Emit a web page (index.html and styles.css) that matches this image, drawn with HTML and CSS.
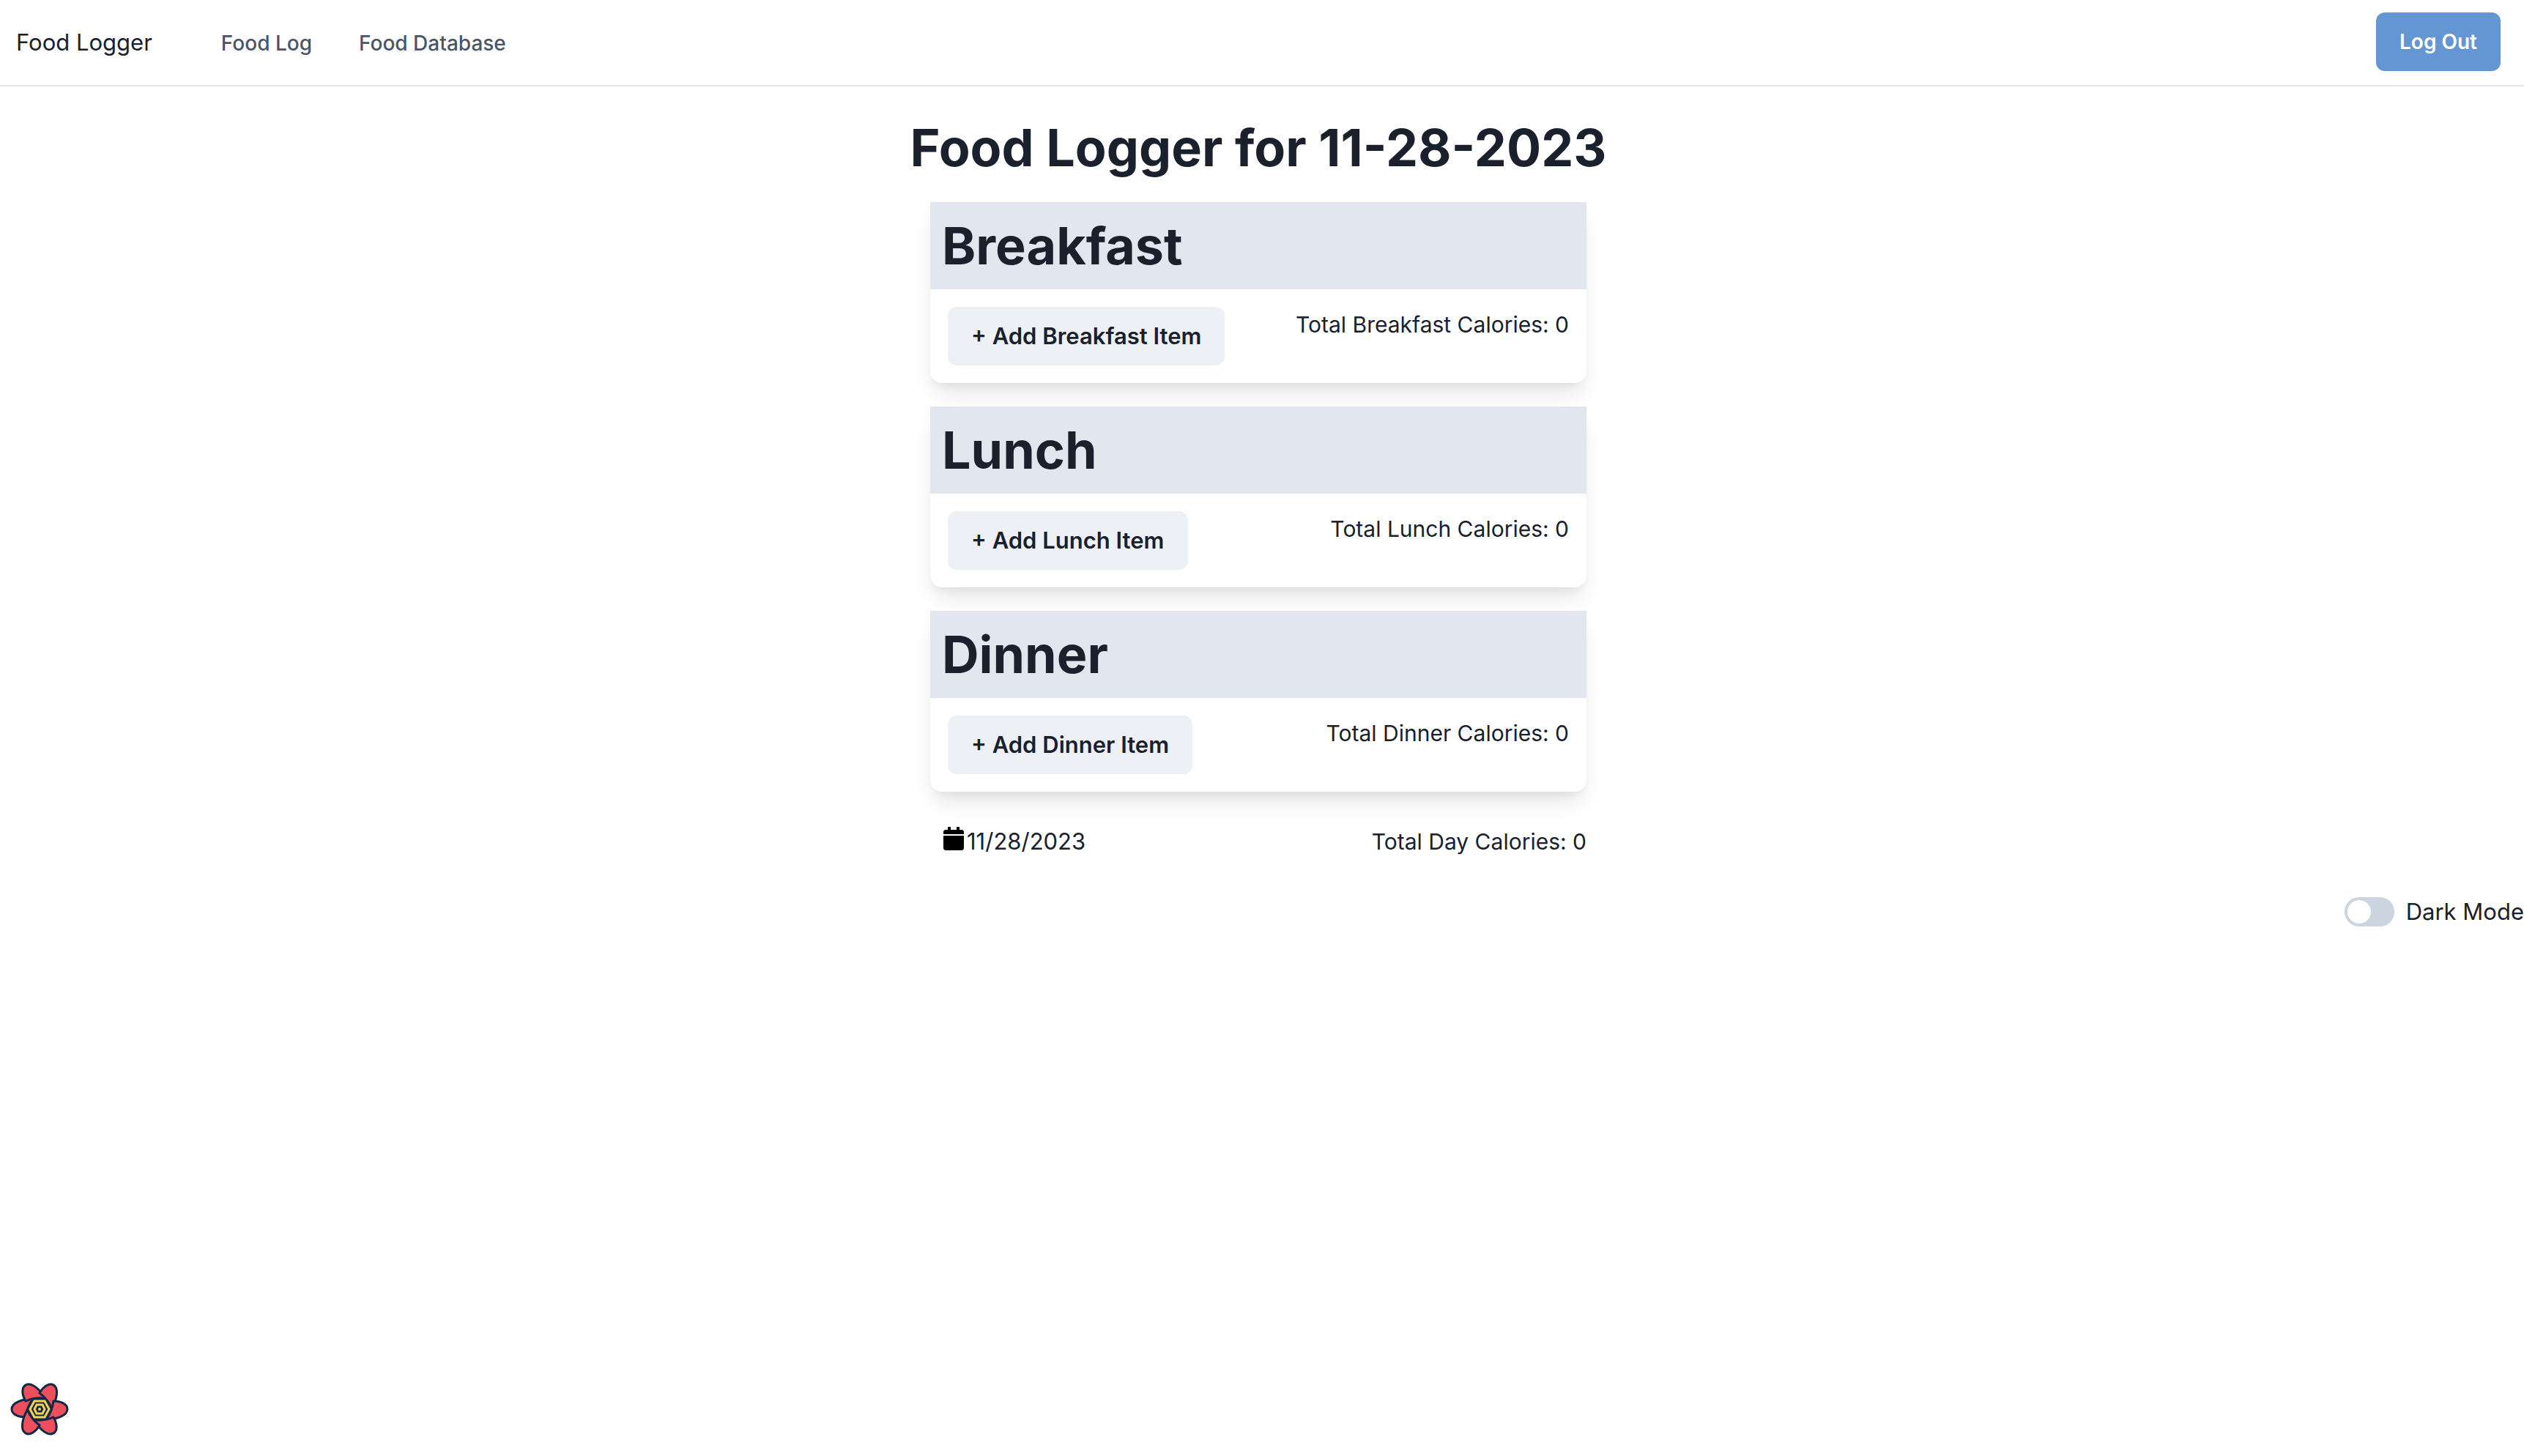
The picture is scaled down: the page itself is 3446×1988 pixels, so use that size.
FILE: index.html
```html
<!DOCTYPE html>
<html lang="en">
<head>
<meta charset="utf-8">
<title>Food Logger</title>
<link rel="stylesheet" href="styles.css">
</head>
<body>
<header class="nav">
  <span class="brand">Food Logger</span>
  <nav class="links">
    <a href="#log">Food Log</a>
    <a href="#database">Food Database</a>
  </nav>
  <button class="btn btn-primary" type="button">Log Out</button>
</header>
<main class="page">
  <h1 class="heading">Food Logger for 11-28-2023</h1>
  <section class="card">
    <h2 class="card-title">Breakfast</h2>
    <div class="card-body">
      <button class="btn" type="button">+ Add Breakfast Item</button>
      <p class="total">Total Breakfast Calories: 0</p>
    </div>
  </section>
  <section class="card">
    <h2 class="card-title">Lunch</h2>
    <div class="card-body">
      <button class="btn" type="button">+ Add Lunch Item</button>
      <p class="total">Total Lunch Calories: 0</p>
    </div>
  </section>
  <section class="card">
    <h2 class="card-title">Dinner</h2>
    <div class="card-body">
      <button class="btn" type="button">+ Add Dinner Item</button>
      <p class="total">Total Dinner Calories: 0</p>
    </div>
  </section>
  <div class="summary">
    <div class="date">
      <svg class="calendar" viewBox="0 0 448 512" aria-hidden="true"><path d="M12 192h424c6.600 0 12 5.400 12 12v260c0 26.500-21.500 48-48 48H48c-26.500 0-48-21.500-48-48V204c0-6.600 5.400-12 12-12zm436-44v-36c0-26.500-21.500-48-48-48h-48V12c0-6.600-5.400-12-12-12h-40c-6.600 0-12 5.400-12 12v52H160V12c0-6.600-5.400-12-12-12h-40c-6.600 0-12 5.400-12 12v52H48C21.500 64 0 85.500 0 112v36c0 6.600 5.400 12 12 12h424c6.600 0 12-5.400 12-12z"/></svg>
      <span>11/28/2023</span>
    </div>
    <p class="total">Total Day Calories: 0</p>
  </div>
</main>
<div class="theme">
  <input class="switch" type="checkbox" role="switch" id="dark">
  <label for="dark">Dark Mode</label>
</div>
<button class="devtools" type="button" aria-label="Open query devtools">
  <svg viewBox="-40 -36 80 72" aria-hidden="true">
    <g fill="#ef4f5c" stroke="#0f2a47" stroke-width="3" stroke-linejoin="round">
      <path id="petal" d="M-9 -14C-23 -14 -38 -9 -38 0C-38 7 -29 11 -19 11C-18 2 -15 -6 -9 -14Z"/>
      <use href="#petal" transform="rotate(60)"/>
      <use href="#petal" transform="rotate(120)"/>
      <use href="#petal" transform="rotate(180)"/>
      <use href="#petal" transform="rotate(240)"/>
      <use href="#petal" transform="rotate(300)"/>
    </g>
    <path fill="#0f2a47" d="M-8 -14H8L16 0L8 14H-8L-16 0Z"/>
    <g fill="none" stroke="#f7d154" stroke-width="3">
      <path d="M-7 -11H7L13 0L7 11H-7L-13 0Z"/>
      <path d="M-4 -6H4L7 0L4 6H-4L-7 0Z"/>
    </g>
    <circle r="2" fill="#f7d154"/>
  </svg>
</button>
</body>
</html>
```

FILE: styles.css
```css
* { box-sizing: border-box; }

body {
  margin: 0;
  background: #fff;
  color: #1a202c;
  font-family: Inter, "Liberation Sans", sans-serif;
  font-size: 31px;
  line-height: 48px;
}

h1, h2, p { margin: 0; }

.nav {
  display: flex;
  align-items: center;
  height: 118px;
  padding: 0 32px 2px 22px;
  border-bottom: 2px solid #e2e8f0;
}

.brand { padding-top: 2px; }

.links {
  display: flex;
  flex: 1;
  gap: 64px;
  margin-left: 94px;
  padding-top: 4px;
}

.links a {
  color: #4a5568;
  font-size: 28px;
  font-weight: 500;
  text-decoration: none;
}

.btn {
  height: 80px;
  padding: 0 32px;
  border: 0;
  border-radius: 12px;
  background: #edf1f6;
  color: #1a202c;
  font: inherit;
  font-weight: 600;
}

.btn-primary {
  background: #6596d4;
  color: #fff;
  font-size: 28px;
}

.page {
  display: flex;
  flex-direction: column;
  align-items: center;
  gap: 32px;
  padding: 40px 10px 0 0;
}

.heading, .card-title {
  font-size: 70px;
  font-weight: 700;
  line-height: 87px;
}

.heading { margin-bottom: -1px; }

.card {
  width: 100%;
  max-width: 896px;
  border-radius: 0 0 16px 16px;
  box-shadow: 0 20px 30px -6px rgba(0, 0, 0, .1), 0 8px 12px -4px rgba(0, 0, 0, .05);
}

.card-title {
  padding: 16px;
  background: #e2e7ef;
}

.card-body {
  display: flex;
  justify-content: space-between;
  padding: 24px;
}

.total { font-size: 30px; }

.summary {
  display: flex;
  justify-content: space-between;
  align-items: center;
  width: 100%;
  max-width: 896px;
  padding: 12px 0 0 18px;
}

.date { display: flex; gap: 4px; }

.calendar {
  width: 28px;
  height: 32px;
  margin-top: 4px;
}

.theme {
  display: flex;
  justify-content: flex-end;
  align-items: center;
  gap: 16px;
  margin-top: 48px;
}

.switch {
  appearance: none;
  width: 68px;
  height: 40px;
  margin: 0;
  padding: 4px;
  border-radius: 20px;
  background: #cbd5e0;
}

.switch::before {
  content: "";
  display: block;
  width: 32px;
  height: 32px;
  border-radius: 50%;
  background: #fff;
}

.switch:checked { background: #3182ce; }
.switch:checked::before { margin-left: auto; }

.devtools {
  position: fixed;
  left: 14px;
  bottom: 28px;
  width: 80px;
  height: 72px;
  padding: 0;
  border: 0;
  background: none;
}

.devtools svg { display: block; width: 80px; height: 72px; }
```
